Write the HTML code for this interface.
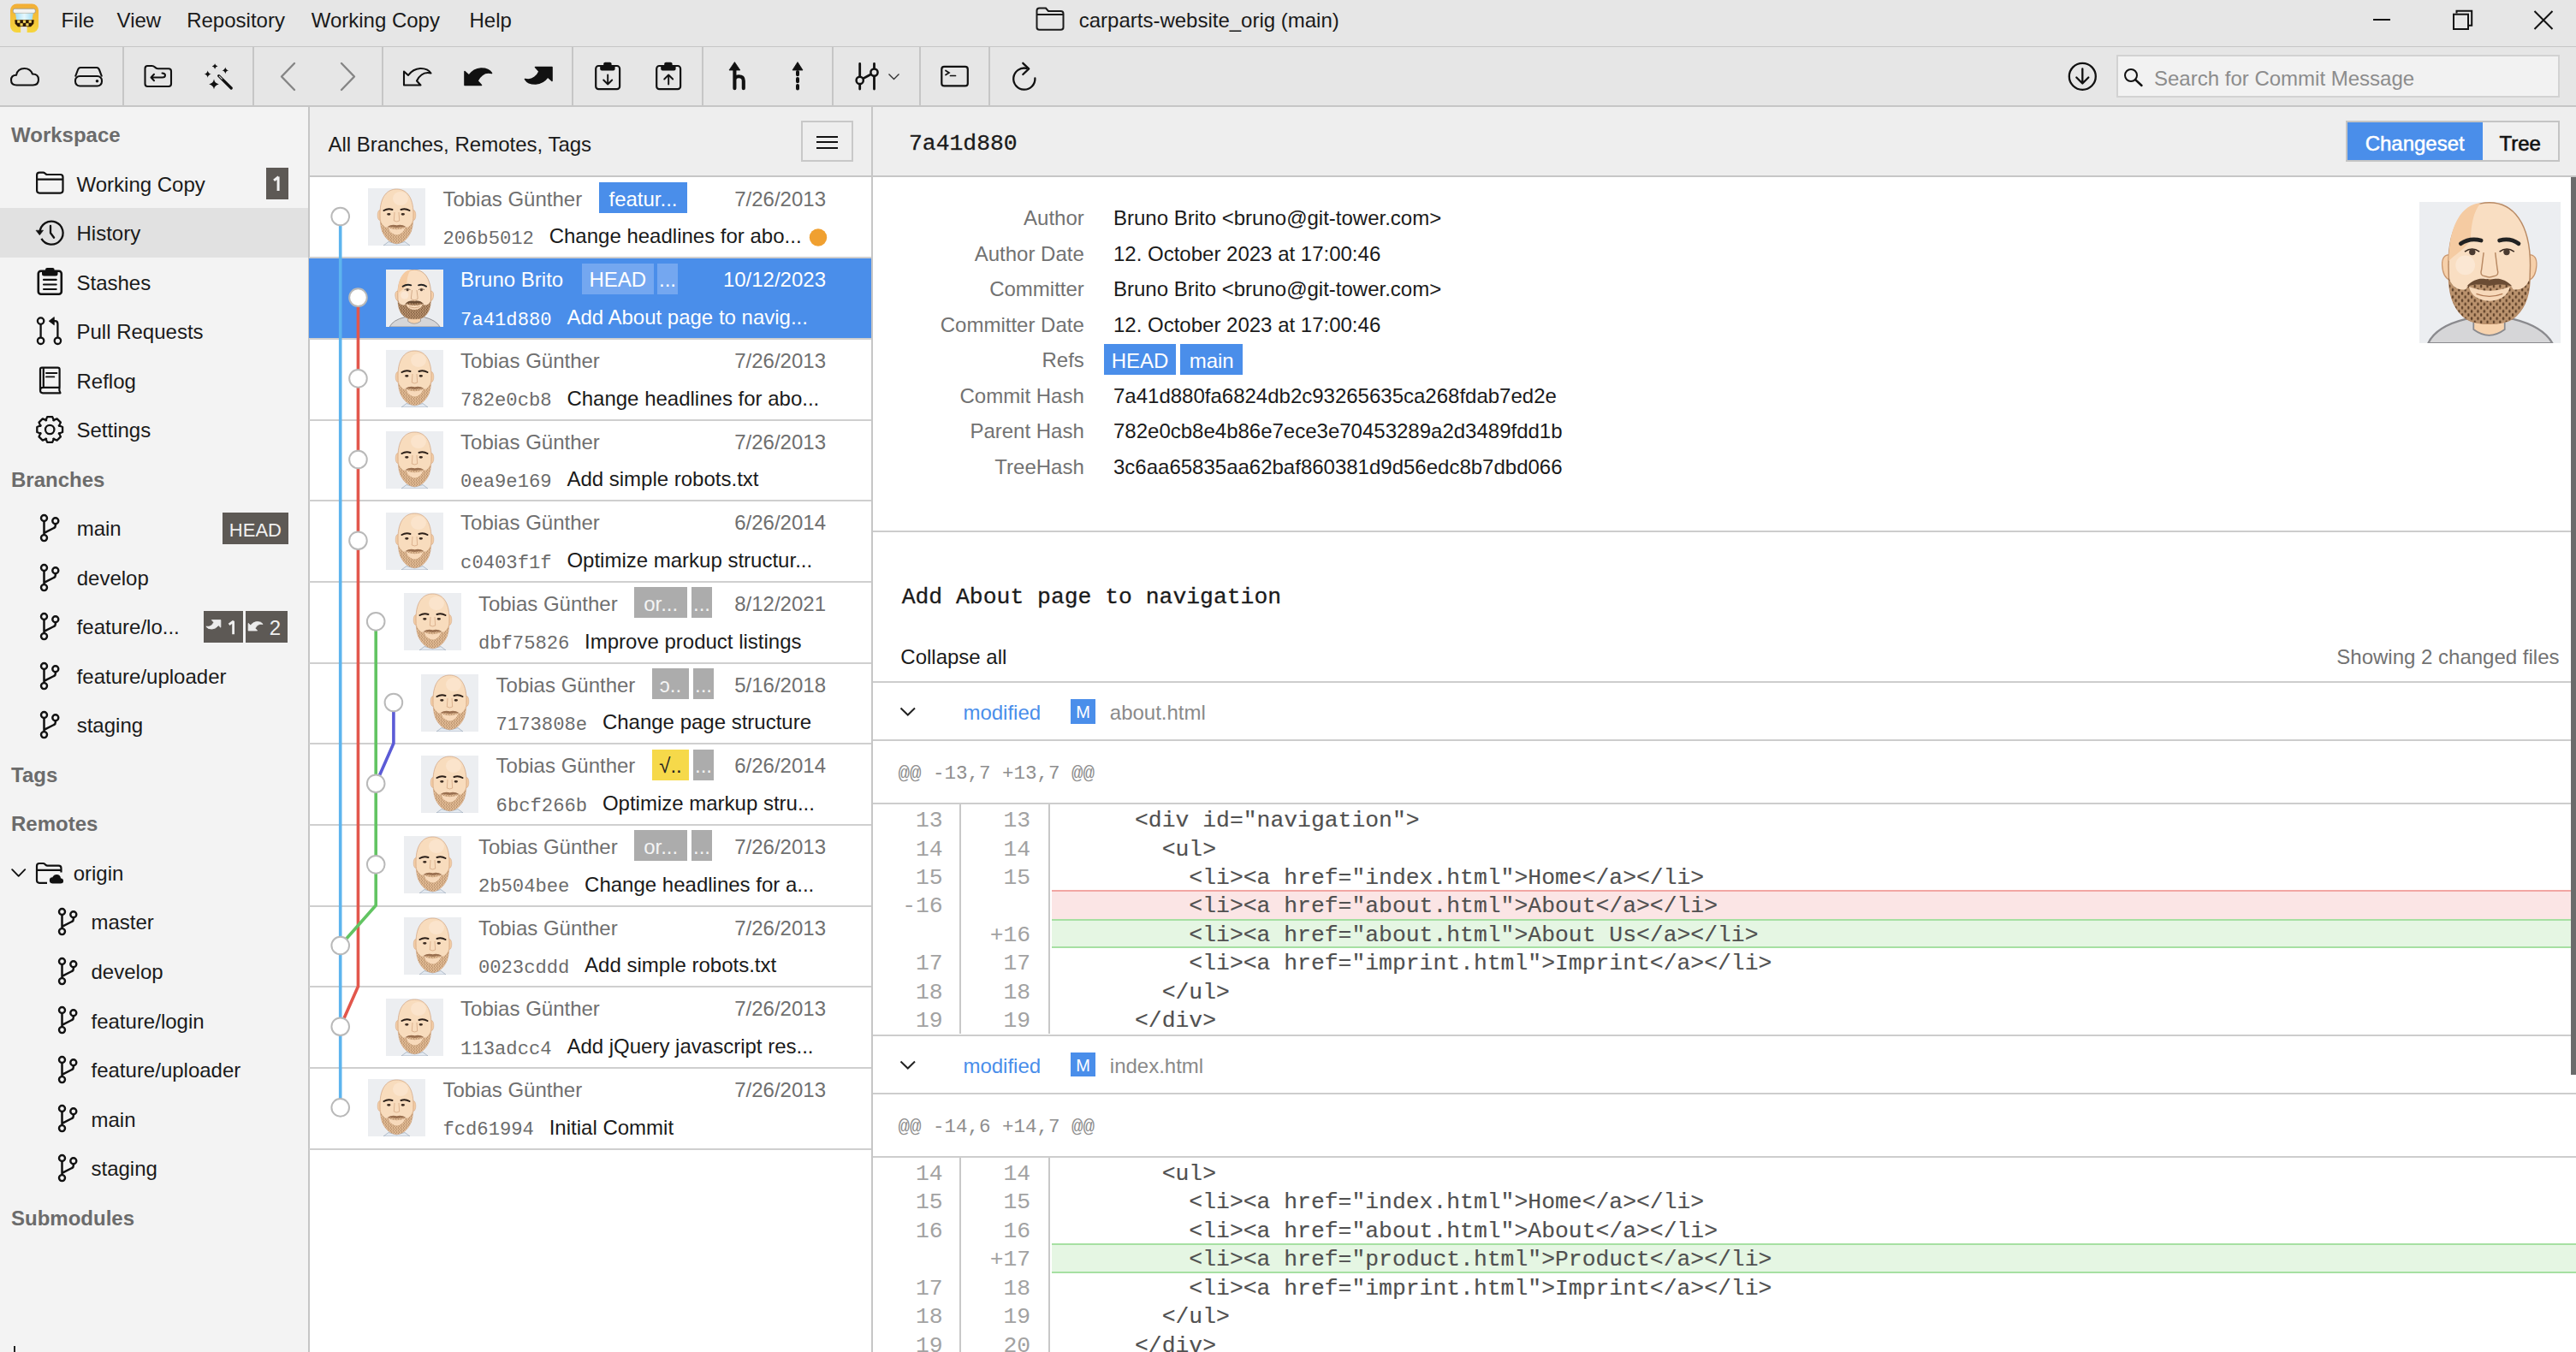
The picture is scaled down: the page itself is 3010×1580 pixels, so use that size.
<!DOCTYPE html><html><head><meta charset="utf-8"><style>
html,body{margin:0;padding:0;width:3010px;height:1580px;overflow:hidden;background:#fff}
.r,.t{position:absolute}
.t{white-space:nowrap}
svg.r{overflow:visible}
</style></head><body>

<svg width="0" height="0" style="position:absolute">
<defs>
<pattern id="stub" width="3" height="3.4" patternUnits="userSpaceOnUse">
<rect width="3" height="3.4" fill="#e2bb94"/><ellipse cx="0.8" cy="0.9" rx="0.45" ry="0.7" fill="#8a6444"/><ellipse cx="2.3" cy="2.6" rx="0.45" ry="0.7" fill="#8a6444"/></pattern>
<pattern id="stub2" width="3" height="3.4" patternUnits="userSpaceOnUse">
<rect width="3" height="3.4" fill="#bb936e"/><ellipse cx="0.8" cy="0.9" rx="0.5" ry="0.8" fill="#5e4028"/><ellipse cx="2.3" cy="2.6" rx="0.5" ry="0.8" fill="#5e4028"/></pattern>
<symbol id="avT" viewBox="0 0 67 67">
<rect width="67" height="67" fill="#eceef1"/>
<path d="M18 67 L24 62.5 L33.5 65 L43 62.5 L49 67 Z" fill="#e3e9f0" stroke="#9aa8b8" stroke-width="0.7"/>
<ellipse cx="13.8" cy="31.5" rx="2.6" ry="6" fill="#f3cda6" stroke="#d2a27c" stroke-width="0.5"/>
<ellipse cx="53.2" cy="31.5" rx="2.6" ry="6" fill="#f3cda6" stroke="#d2a27c" stroke-width="0.5"/>
<path d="M14 30 C14 9 23 1 33.5 1 C44 1 53 9 53 30 C53 38 52.5 44 50.5 50 C47 59 40 64.5 33.5 64.5 C27 64.5 20 59 16.5 50 C14.5 44 14 38 14 30 Z" fill="#f8dcbd" stroke="#c9966e" stroke-width="0.6"/>
<ellipse cx="38" cy="12" rx="9" ry="8" fill="#fbe6cf" opacity="0.8"/>
<path d="M14.5 37 C15 44 15.5 47 16.5 50 C20 59 27 64.5 33.5 64.5 C40 64.5 47 59 50.5 50 C51.5 47 52 44 52.5 37 C50.5 43 47.5 46 44 46 C41 44 37 43 33.5 43 C30 43 26 44 23 46 C19.5 46 16.5 43 14.5 37 Z" fill="url(#stub)"/>
<path d="M23.5 46 Q33.5 50.5 43.5 46 Q40.5 54 33.5 54.5 Q26.5 54 23.5 46 Z" fill="#f7d9ba"/>
<path d="M22 45.5 C27 42 31 42.5 33.5 43.5 C36 42.5 40 42 45 45.5 C40 45 36 45.5 33.5 46 C31 45.5 27 45 22 45.5 Z" fill="#9a7050"/>
<path d="M18.5 26 Q23.5 23 28.5 25" stroke="#2b1f18" stroke-width="2" fill="none" stroke-linecap="round"/>
<path d="M38.5 25 Q43.5 23 48.5 26" stroke="#2b1f18" stroke-width="2" fill="none" stroke-linecap="round"/>
<ellipse cx="24.3" cy="30.3" rx="2.2" ry="1.4" fill="#3a2a20"/>
<ellipse cx="40.8" cy="30.3" rx="2.2" ry="1.4" fill="#3a2a20"/>
<path d="M31 28 L30.3 38 Q33.5 40 36.7 38 L36 28" stroke="#c99770" stroke-width="0.6" fill="none"/>
</symbol>
<symbol id="avB" viewBox="0 0 67 67">
<rect width="67" height="67" fill="#eceef1"/>
<path d="M4.2 67 Q8 59 22 55.6 L44.5 55.6 Q58.5 59 63.1 67 Z" fill="#d6d6d8" stroke="#8a8a8e" stroke-width="0.9"/>
<path d="M25.7 52 L25.7 60.5 Q33.1 66 40.5 60.5 L40.5 52 Z" fill="#f7d3ae" stroke="#8a8a8e" stroke-width="0.7"/>
<path d="M14.5 25 Q10.6 25 10.8 30 Q11.2 36 14.5 37 Z" fill="#f6d0aa" stroke="#c9966e" stroke-width="0.5"/>
<path d="M52 25 Q55.8 25 55.6 30 Q55.2 36 52 37 Z" fill="#f6d0aa" stroke="#c9966e" stroke-width="0.5"/>
<path d="M13.8 30 C13.8 10 22 0.3 33.2 0.3 C44.4 0.3 52.6 10 52.6 30 L52.4 37 C52 46 49 52 44 55.5 C41 57.5 37 57.8 33.2 57.8 C29.4 57.8 25.4 57.5 22.4 55.5 C17.4 52 14.4 46 14 37 Z" fill="#f9dec2" stroke="#b98a64" stroke-width="0.6"/>
<path d="M13.9 28 C13.9 10 21 0.8 29 0.6 C26 4 24.5 10 24.3 18 C22 22 17 25 13.9 28 Z" fill="#f5cba2"/>
<circle cx="21.8" cy="30" r="4.6" fill="#fbe7d3"/>
<path d="M14 36 C14.2 46 17 52 22.4 55.5 C25.4 57.5 29.4 57.8 33.2 57.8 C37 57.8 41 57.5 44 55.5 C49 52 52 46 52.4 36 C51 40.5 48 42 44.5 41.5 C43.5 39 39 36.5 33.2 36.5 C27.5 36.5 23 39 22 41.5 C18.5 42 15.5 40.5 14 36 Z" fill="url(#stub2)"/>
<path d="M23.5 40.2 Q33.2 44 43 40.2 Q41.5 46.5 33.2 47 Q25 46.5 23.5 40.2 Z" fill="#f7d9ba"/>
<path d="M27 43.6 Q33.2 46 39.5 43.6" stroke="#b07a55" stroke-width="0.5" fill="none"/>
<path d="M22.5 40 C26 36.2 30 35.8 33.2 37.2 C36.5 35.8 40.5 36.2 44 40 C40 38.8 36.5 39 33.2 39.8 C30 39 26.5 38.8 22.5 40 Z" fill="#6a4c34"/>
<path d="M19.6 19.8 Q24 16.8 29.3 18.3" stroke="#222" stroke-width="1.9" fill="none" stroke-linecap="round"/>
<path d="M38 18.3 Q43 16.8 47.1 19.8" stroke="#222" stroke-width="1.9" fill="none" stroke-linecap="round"/>
<path d="M21.5 23.6 Q25 21 28.5 23.6" stroke="#3a2a20" stroke-width="0.6" fill="none"/>
<path d="M38 23.6 Q41.5 21 45 23.6" stroke="#3a2a20" stroke-width="0.6" fill="none"/>
<circle cx="25.1" cy="23.8" r="1.5" fill="#4a3a30"/>
<circle cx="41.4" cy="23.8" r="1.5" fill="#4a3a30"/>
<path d="M30.5 24 L29.5 32 Q28.5 35 31 35.2 Q33.2 36.2 35.4 35.2 Q38 35 37 32 L36 24" stroke="#b98a64" stroke-width="0.6" fill="none"/>
</symbol>
</defs></svg>

<div class="r" style="left:0.0px;top:0.0px;width:3010.0px;height:54.0px;background:#e6e6e6"></div>
<div class="r" style="left:0.0px;top:53.6px;width:3010.0px;height:1.8px;background:#c6c6c6"></div>
<svg class="r" style="left:11.0px;top:4.0px" width="35" height="35" viewBox="0 0 35 35">
<defs><linearGradient id="ig" x1="0" y1="0" x2="0" y2="1"><stop offset="0" stop-color="#f2ad35"/><stop offset="1" stop-color="#f6d63e"/></linearGradient>
<linearGradient id="gl" x1="0" y1="0" x2="1" y2="0"><stop offset="0" stop-color="#9fdcf5"/><stop offset="0.5" stop-color="#e6f8fd"/><stop offset="1" stop-color="#9fdcf5"/></linearGradient></defs>
<rect x="1" y="0.5" width="33" height="33.5" rx="7.5" fill="url(#ig)"/>
<rect x="4.3" y="6.2" width="26" height="5.2" rx="2" fill="#f3f3f1" stroke="#8c8c8c" stroke-width="0.7"/>
<path d="M7 11.4 L27.8 11.4 L26.5 19.3 L8.3 19.3 Z" fill="url(#gl)"/>
<path d="M6.3 19.3 L28.7 19.3 L28.3 23.8 L25 27.2 L10 27.2 L6.7 23.8 Z" fill="#2a1606"/><rect x="9.2" y="19.6" width="3.2" height="3.2" fill="#f4d75e"/><rect x="15.9" y="19.6" width="3.2" height="3.2" fill="#f4d75e"/><rect x="22.6" y="19.6" width="3.2" height="3.2" fill="#f4d75e"/><rect x="12.5" y="23.2" width="3.2" height="3.2" fill="#f4d75e"/><rect x="19.3" y="23.2" width="3.2" height="3.2" fill="#f4d75e"/><rect x="13.2" y="27.2" width="7.4" height="6.8" fill="#e6e6e4"/>
</svg>
<div class="t" style="left:71.4px;top:6.5px;font-size:24.0px;line-height:34px;font-family:'Liberation Sans', sans-serif;color:#1a1a1a">File</div>
<div class="t" style="left:136.6px;top:6.5px;font-size:24.0px;line-height:34px;font-family:'Liberation Sans', sans-serif;color:#1a1a1a">View</div>
<div class="t" style="left:218.2px;top:6.5px;font-size:24.0px;line-height:34px;font-family:'Liberation Sans', sans-serif;color:#1a1a1a">Repository</div>
<div class="t" style="left:363.7px;top:6.5px;font-size:24.0px;line-height:34px;font-family:'Liberation Sans', sans-serif;color:#1a1a1a">Working Copy</div>
<div class="t" style="left:548.5px;top:6.5px;font-size:24.0px;line-height:34px;font-family:'Liberation Sans', sans-serif;color:#1a1a1a">Help</div>
<svg class="r" style="left:1209.0px;top:7.0px" width="36" height="30" viewBox="0 0 36 30"><path d="M2.5 5.5 Q2.5 2.5 5.5 2.5 L13 2.5 L16 6 L30.5 6 Q33.5 6 33.5 9 L33.5 25 Q33.5 27.8 30.5 27.8 L5.5 27.8 Q2.5 27.8 2.5 25 Z M2.5 10 L33.5 10" fill="none" stroke="#1a1a1a" stroke-width="2"/></svg>
<div class="t" style="left:1260.7px;top:7.0px;font-size:24.0px;line-height:34px;font-family:'Liberation Sans', sans-serif;color:#1a1a1a">carparts-website_orig (main)</div>
<div class="r" style="left:2772.5px;top:21.8px;width:20.5px;height:2.0px;background:#111"></div>
<svg class="r" style="left:2862.0px;top:8.0px" width="32" height="30" viewBox="0 0 32 30"><path d="M8.5 7.5 L8.5 4.7 L26.2 4.7 L26.2 21.8 L22 21.8" fill="none" stroke="#111" stroke-width="2"/><rect x="5" y="8.7" width="17" height="17.3" fill="none" stroke="#111" stroke-width="2"/></svg>
<svg class="r" style="left:2958.0px;top:10.0px" width="28" height="28" viewBox="0 0 28 28"><path d="M3.5 3 L24.5 24 M24.5 3 L3.5 24" stroke="#111" stroke-width="2"/></svg>
<div class="r" style="left:0.0px;top:55.0px;width:3010.0px;height:68.0px;background:#e6e6e6"></div>
<div class="r" style="left:0.0px;top:123.0px;width:3010.0px;height:2.0px;background:#c6c6c6"></div>
<div class="r" style="left:142.6px;top:55.0px;width:2.0px;height:68.0px;background:#c6c6c6"></div>
<div class="r" style="left:295.0px;top:55.0px;width:2.0px;height:68.0px;background:#c6c6c6"></div>
<div class="r" style="left:446.0px;top:55.0px;width:2.0px;height:68.0px;background:#c6c6c6"></div>
<div class="r" style="left:668.4px;top:55.0px;width:2.0px;height:68.0px;background:#c6c6c6"></div>
<div class="r" style="left:820.0px;top:55.0px;width:2.0px;height:68.0px;background:#c6c6c6"></div>
<div class="r" style="left:971.7px;top:55.0px;width:2.0px;height:68.0px;background:#c6c6c6"></div>
<div class="r" style="left:1073.6px;top:55.0px;width:2.0px;height:68.0px;background:#c6c6c6"></div>
<div class="r" style="left:1154.6px;top:55.0px;width:2.0px;height:68.0px;background:#c6c6c6"></div>
<svg class="r" style="left:0;top:55px" width="3010" height="70" viewBox="0 55 3010 70"><path d="M19.5 99.5 Q13 99.5 13 93.5 Q13 88 19 87.8 Q20.5 80 28.5 80 Q35.5 80 38 86.5 Q45 86.5 45 93 Q45 99.5 38.5 99.5 Z" fill="none" stroke="#111" stroke-width="2.1" stroke-linejoin="round"/><path d="M94 79 L113 79 Q115 79 116 81.5 L119 89.5 M88 89.5 L91 81.5 Q92 79 94 79" fill="none" stroke="#111" stroke-width="2.1"/><rect x="88" y="89" width="31" height="11.5" rx="5.2" fill="none" stroke="#111" stroke-width="2.1"/><circle cx="113.5" cy="94.8" r="1.8" fill="#111"/><path d="M169.5 80 Q169.5 77 172.5 77 L177.5 77 Q179.5 77 181 78.5 Q182.5 80.2 184.5 80.2 L197 80.2 Q200 80.2 200 83.2 L200 98 Q200 101 197 101 L172.5 101 Q169.5 101 169.5 98 Z" fill="none" stroke="#111" stroke-width="2.1"/><path d="M180 86.8 L176.5 90.5 L180 94.2 M177 90.5 L189.5 90.5 Q193 90.5 193 88 Q193 85.5 189.5 85.5" fill="none" stroke="#111" stroke-width="2" stroke-linecap="round" stroke-linejoin="round"/><path d="M251.10 74.20 Q251.63 76.97 254.40 77.50 Q251.63 78.03 251.10 80.80 Q250.57 78.03 247.80 77.50 Q250.57 76.97 251.10 74.20 Z M263.30 78.40 Q263.92 81.68 267.20 82.30 Q263.92 82.92 263.30 86.20 Q262.68 82.92 259.40 82.30 Q262.68 81.68 263.30 78.40 Z M242.70 82.40 Q243.37 85.93 246.90 86.60 Q243.37 87.27 242.70 90.80 Q242.03 87.27 238.50 86.60 Q242.03 85.93 242.70 82.40 Z M250.00 92.60 Q250.93 97.47 255.80 98.40 Q250.93 99.33 250.00 104.20 Q249.07 99.33 244.20 98.40 Q249.07 97.47 250.00 92.60 Z" fill="#111"/><path d="M255.7 88.6 L270.2 103" stroke="#111" stroke-width="3.2" stroke-linecap="round"/><path d="M256.3 89.2 L259.3 92.2" stroke="#e6e6e6" stroke-width="1.1" stroke-linecap="round"/><path d="M344 74 L329 89.5 L344 105" fill="none" stroke="#858585" stroke-width="2.4" stroke-linecap="round" stroke-linejoin="round"/><path d="M399 74 L414 89.5 L399 105" fill="none" stroke="#858585" stroke-width="2.4" stroke-linecap="round" stroke-linejoin="round"/><path transform="translate(469,75)" d="M3 8.5 L8 13 Q13.5 5.5 22 5 Q31 4.8 34.5 10.5 Q28 9 23.5 12.5 Q20 15 18 19.5 L22.5 24.5 L3 24.5 Z" fill="none" stroke="#111" stroke-width="2.1" stroke-linejoin="round"/><path transform="translate(540,75)" d="M3 8.5 L8 13 Q13.5 5.5 22 5 Q31 4.8 34.5 10.5 Q28 9 23.5 12.5 Q20 15 18 19.5 L22.5 24.5 L3 24.5 Z" fill="#111" stroke="#111" stroke-width="1.6" stroke-linejoin="round"/><path transform="translate(648,103) scale(-1,-1)" d="M3 8.5 L8 13 Q13.5 5.5 22 5 Q31 4.8 34.5 10.5 Q28 9 23.5 12.5 Q20 15 18 19.5 L22.5 24.5 L3 24.5 Z" fill="#111" stroke="#111" stroke-width="1.6" stroke-linejoin="round"/><g transform="translate(0,0)"><rect x="696.2" y="77" width="27.9" height="27.2" rx="3.2" fill="none" stroke="#111" stroke-width="2.2"/><path d="M701.2 77 L701.2 80.5 Q701.2 82.4 703.2 82.4 L716.6 82.4 Q718.6 82.4 718.6 80.5 L718.6 77 L714.6 77 L714.6 74.5 Q714.6 72.8 712.6 72.8 L707.2 72.8 Q705.2 72.8 705.2 74.5 L705.2 77 Z" fill="#111"/><path d="M710.2 87.5 L710.2 98.5 M705.2 93.5 L710.2 98.5 L715.2 93.5" fill="none" stroke="#111" stroke-width="1.9" stroke-linecap="round" stroke-linejoin="round"/></g><g transform="translate(71,0)"><rect x="696.2" y="77" width="27.9" height="27.2" rx="3.2" fill="none" stroke="#111" stroke-width="2.2"/><path d="M701.2 77 L701.2 80.5 Q701.2 82.4 703.2 82.4 L716.6 82.4 Q718.6 82.4 718.6 80.5 L718.6 77 L714.6 77 L714.6 74.5 Q714.6 72.8 712.6 72.8 L707.2 72.8 Q705.2 72.8 705.2 74.5 L705.2 77 Z" fill="#111"/><path d="M710.2 98.5 L710.2 87.5 M705.2 92.5 L710.2 87.5 L715.2 92.5" fill="none" stroke="#111" stroke-width="1.9" stroke-linecap="round" stroke-linejoin="round"/></g><path d="M852 82 L858.4 72.6 L864.8 82 Z" fill="#111" stroke="#111" stroke-width="0.8" stroke-linejoin="round"/><path d="M858.4 80 L858.4 103.2 M858.4 93.5 Q858.4 89.2 863.2 89.2 Q868.8 89.2 868.8 94.5 L868.8 103.2" fill="none" stroke="#111" stroke-width="4.1" stroke-linecap="round"/><path d="M926 82 L932 72.6 L938 82 Z" fill="#111" stroke="#111" stroke-width="0.8" stroke-linejoin="round"/><path d="M932 84 L932 87.2 M932 92 L932 95.2 M932 100 L932 103.5" fill="none" stroke="#111" stroke-width="4" stroke-linecap="round"/><path d="M1004.7 74.5 L1004.7 104 M1021.5 74.5 L1021.5 104" stroke="#111" stroke-width="2.8" stroke-linecap="round"/><path d="M1004.7 93.9 L1021.5 84.6" stroke="#111" stroke-width="2.8"/><circle cx="1004.7" cy="93.9" r="4.1" fill="#e6e6e6" stroke="#111" stroke-width="2.5"/><circle cx="1021.5" cy="84.6" r="4.1" fill="#e6e6e6" stroke="#111" stroke-width="2.5"/><path d="M1038.5 86.5 L1044.5 92.5 L1050.5 86.5" fill="none" stroke="#333" stroke-width="1.4"/><rect x="1100.3" y="77.9" width="30.5" height="22.5" rx="3" fill="none" stroke="#111" stroke-width="2.2"/><path d="M1105 82.5 L1109 85 L1105 87.5 M1110.5 88.5 L1116.5 88.5" fill="none" stroke="#111" stroke-width="1.7" stroke-linecap="round"/><path d="M1199.5 79.8 A12.6 12.6 0 1 0 1209.4 91.5" fill="none" stroke="#111" stroke-width="2.3" stroke-linecap="round"/><path d="M1195.3 73.8 L1202.2 80.4 L1195.3 87" fill="none" stroke="#111" stroke-width="2.3" stroke-linecap="round" stroke-linejoin="round"/><circle cx="2433.3" cy="89.3" r="15.5" fill="none" stroke="#111" stroke-width="2.3"/><path d="M2433.3 80.5 L2433.3 97.5 M2426.3 90.5 L2433.3 97.5 L2440.3 90.5" fill="none" stroke="#111" stroke-width="2.3" stroke-linecap="round" stroke-linejoin="round"/></svg>
<div class="r" style="left:2473.0px;top:64.0px;width:518.0px;height:50.0px;background:#f2f2f2;box-sizing:border-box;border:2px solid #d2d2d2"></div>
<svg class="r" style="left:2480.0px;top:78.0px" width="26" height="24" viewBox="0 0 26 24"><circle cx="10" cy="10" r="7" fill="none" stroke="#111" stroke-width="2"/><path d="M15 15 L22.5 22" stroke="#111" stroke-width="2.4" stroke-linecap="round"/></svg>
<div class="t" style="left:2517.0px;top:74.5px;font-size:24.0px;line-height:34px;font-family:'Liberation Sans', sans-serif;color:#8c8c8c">Search for Commit Message</div>
<div class="r" style="left:0.0px;top:125.0px;width:360.0px;height:1455.0px;background:#f3f3f3"></div>
<div class="r" style="left:360.0px;top:125.0px;width:2.0px;height:1455.0px;background:#c6c6c6"></div>
<div class="r" style="left:0.0px;top:243.1px;width:360.0px;height:57.5px;background:#e1e1e1"></div>
<div class="t" style="left:13.0px;top:141.1px;font-size:24.0px;line-height:34px;font-family:'Liberation Sans', sans-serif;color:#6b6b6b;font-weight:bold">Workspace</div>
<div class="t" style="left:13.0px;top:543.7px;font-size:24.0px;line-height:34px;font-family:'Liberation Sans', sans-serif;color:#6b6b6b;font-weight:bold">Branches</div>
<div class="t" style="left:13.0px;top:888.9px;font-size:24.0px;line-height:34px;font-family:'Liberation Sans', sans-serif;color:#6b6b6b;font-weight:bold">Tags</div>
<div class="t" style="left:13.0px;top:946.4px;font-size:24.0px;line-height:34px;font-family:'Liberation Sans', sans-serif;color:#6b6b6b;font-weight:bold">Remotes</div>
<div class="t" style="left:13.0px;top:1406.5px;font-size:24.0px;line-height:34px;font-family:'Liberation Sans', sans-serif;color:#6b6b6b;font-weight:bold">Submodules</div>
<div class="t" style="left:89.5px;top:198.6px;font-size:24.0px;line-height:34px;font-family:'Liberation Sans', sans-serif;color:#1a1a1a">Working Copy</div>
<div class="t" style="left:89.5px;top:256.1px;font-size:24.0px;line-height:34px;font-family:'Liberation Sans', sans-serif;color:#1a1a1a">History</div>
<div class="t" style="left:89.5px;top:313.7px;font-size:24.0px;line-height:34px;font-family:'Liberation Sans', sans-serif;color:#1a1a1a">Stashes</div>
<div class="t" style="left:89.5px;top:371.2px;font-size:24.0px;line-height:34px;font-family:'Liberation Sans', sans-serif;color:#1a1a1a">Pull Requests</div>
<div class="t" style="left:89.5px;top:428.7px;font-size:24.0px;line-height:34px;font-family:'Liberation Sans', sans-serif;color:#1a1a1a">Reflog</div>
<div class="t" style="left:89.5px;top:486.2px;font-size:24.0px;line-height:34px;font-family:'Liberation Sans', sans-serif;color:#1a1a1a">Settings</div>
<svg class="r" style="left:0;top:125px" width="360" height="1455" viewBox="0 125 360 1455"><path d="M43.1 204.6 Q43.1 201.6 46.1 201.6 L50.5 201.6 Q51.5 201.6 52.3 202.4 L53.5 203.3 Q54.3 204 55.3 204 L70.5 204 Q73.5 204 73.5 207 L73.5 222.6 Q73.5 225.6 70.5 225.6 L46.1 225.6 Q43.1 225.6 43.1 222.6 Z M43.1 209.7 L73.5 209.7" fill="none" stroke="#111" stroke-width="2.2" stroke-linejoin="round"/><path d="M46.6 271.6 A13.5 13.5 0 1 1 48.4 278.9" fill="none" stroke="#111" stroke-width="2.3"/><path d="M42 269.2 L50.6 269.2 L46.3 274.8 Z" fill="#111" stroke="#111" stroke-width="0.6" stroke-linejoin="round"/><path d="M59 264 L59 272.2 L63.1 277.7" fill="none" stroke="#111" stroke-width="2.3" stroke-linecap="round" stroke-linejoin="round"/><rect x="44.8" y="316.8" width="27" height="27" rx="3" fill="none" stroke="#111" stroke-width="2.6"/><path d="M49 316 L49 320 Q49 322.5 51.5 322.5 L65 322.5 Q67.5 322.5 67.5 320 L67.5 316 L63.5 316 L63.5 314.5 Q63.5 312.9 61.5 312.9 L55.1 312.9 Q53.1 312.9 53.1 314.5 L53.1 316 Z" fill="#111"/><path d="M51 326.9 L65.7 326.9 M51 332.5 L65.7 332.5 M51 338 L65.7 338" stroke="#111" stroke-width="2.1" stroke-linecap="round"/><circle cx="47.6" cy="375.1" r="3.7" fill="none" stroke="#111" stroke-width="2.3"/><circle cx="47.6" cy="398.3" r="3.7" fill="none" stroke="#111" stroke-width="2.3"/><circle cx="67.4" cy="398.3" r="3.7" fill="none" stroke="#111" stroke-width="2.3"/><path d="M47.6 378.8 L47.6 394.6 M67.4 394.6 L67.4 378.5 Q67.4 375.2 64.2 375.2 L61.5 375.2" fill="none" stroke="#111" stroke-width="2.3"/><path d="M57.2 375.2 L63.3 370.6 L63.3 379.8 Z" fill="#111" stroke="#111" stroke-width="0.8" stroke-linejoin="round"/><path d="M47 456 L47 431.5 Q47 429.6 49 429.6 L67.5 429.6 Q69.6 429.6 69.6 431.5 L69.6 452.8 L50 452.8 Q47 452.8 47 456 Q47 459.3 50 459.3 L70.5 459.3 Q68.5 456 69.6 452.8 M50.8 430.5 L50.8 452" fill="none" stroke="#111" stroke-width="2.2" stroke-linejoin="round"/><path d="M54 436 L66.4 436 M54 440.4 L63.3 440.4" stroke="#111" stroke-width="1.9" stroke-linecap="round"/><path d="M73.10 498.98 L73.10 505.02 L68.79 506.73 L69.03 506.14 L70.87 510.40 L66.60 514.67 L62.34 512.83 L62.93 512.59 L61.22 516.90 L55.18 516.90 L53.47 512.59 L54.06 512.83 L49.80 514.67 L45.53 510.40 L47.37 506.14 L47.61 506.73 L43.30 505.02 L43.30 498.98 L47.61 497.27 L47.37 497.86 L45.53 493.60 L49.80 489.33 L54.06 491.17 L53.47 491.41 L55.18 487.10 L61.22 487.10 L62.93 491.41 L62.34 491.17 L66.60 489.33 L70.87 493.60 L69.03 497.86 L68.79 497.27 Z" fill="none" stroke="#111" stroke-width="2.3" stroke-linejoin="round"/><circle cx="58.2" cy="502" r="5.2" fill="none" stroke="#111" stroke-width="2.3"/><path d="M14.2 1016.2 L21.7 1023.8 L29.2 1016.2" fill="none" stroke="#111" stroke-width="1.9" stroke-linecap="round" stroke-linejoin="round"/><path d="M55 1031.8 L46 1031.8 Q43 1031.8 43 1028.8 L43 1012 Q43 1009 46 1009 L50.5 1009 Q51.5 1009 52.3 1009.8 L53.5 1010.9 Q54.3 1011.7 55.3 1011.7 L68.5 1011.7 Q71.5 1011.7 71.5 1014.7 L71.5 1019.5 M43 1016.8 L71.2 1016.8" fill="none" stroke="#111" stroke-width="2.2" stroke-linejoin="round"/><path d="M61.5 1033 Q57.2 1033 57.2 1028.8 Q57.2 1025 61 1024.6 Q62.5 1021.3 66.2 1021.3 Q70.8 1021.3 71.5 1025.8 Q74.7 1026.3 74.7 1029.5 Q74.7 1033 71 1033 Z" fill="#111" stroke="#f3f3f3" stroke-width="1.2"/></svg>
<svg class="r" style="left:44.0px;top:599.0px" width="26" height="36" viewBox="0 0 26 36"><circle cx="7.5" cy="6.5" r="3.5" fill="none" stroke="#111" stroke-width="2.4"/><circle cx="20.8" cy="9.8" r="3.5" fill="none" stroke="#111" stroke-width="2.4"/><circle cx="7.5" cy="29.6" r="3.5" fill="none" stroke="#111" stroke-width="2.4"/><path d="M7.5 10 L7.5 26.1 M20.8 13.3 L20.8 15.2 Q20.8 17.2 19 18 L8 23.6" fill="none" stroke="#111" stroke-width="2.5" stroke-linejoin="round"/></svg>
<div class="t" style="left:89.7px;top:601.3px;font-size:24.0px;line-height:34px;font-family:'Liberation Sans', sans-serif;color:#1a1a1a">main</div>
<svg class="r" style="left:44.0px;top:656.5px" width="26" height="36" viewBox="0 0 26 36"><circle cx="7.5" cy="6.5" r="3.5" fill="none" stroke="#111" stroke-width="2.4"/><circle cx="20.8" cy="9.8" r="3.5" fill="none" stroke="#111" stroke-width="2.4"/><circle cx="7.5" cy="29.6" r="3.5" fill="none" stroke="#111" stroke-width="2.4"/><path d="M7.5 10 L7.5 26.1 M20.8 13.3 L20.8 15.2 Q20.8 17.2 19 18 L8 23.6" fill="none" stroke="#111" stroke-width="2.5" stroke-linejoin="round"/></svg>
<div class="t" style="left:89.7px;top:658.8px;font-size:24.0px;line-height:34px;font-family:'Liberation Sans', sans-serif;color:#1a1a1a">develop</div>
<svg class="r" style="left:44.0px;top:714.1px" width="26" height="36" viewBox="0 0 26 36"><circle cx="7.5" cy="6.5" r="3.5" fill="none" stroke="#111" stroke-width="2.4"/><circle cx="20.8" cy="9.8" r="3.5" fill="none" stroke="#111" stroke-width="2.4"/><circle cx="7.5" cy="29.6" r="3.5" fill="none" stroke="#111" stroke-width="2.4"/><path d="M7.5 10 L7.5 26.1 M20.8 13.3 L20.8 15.2 Q20.8 17.2 19 18 L8 23.6" fill="none" stroke="#111" stroke-width="2.5" stroke-linejoin="round"/></svg>
<div class="t" style="left:89.7px;top:716.3px;font-size:24.0px;line-height:34px;font-family:'Liberation Sans', sans-serif;color:#1a1a1a">feature/lo...</div>
<svg class="r" style="left:44.0px;top:771.6px" width="26" height="36" viewBox="0 0 26 36"><circle cx="7.5" cy="6.5" r="3.5" fill="none" stroke="#111" stroke-width="2.4"/><circle cx="20.8" cy="9.8" r="3.5" fill="none" stroke="#111" stroke-width="2.4"/><circle cx="7.5" cy="29.6" r="3.5" fill="none" stroke="#111" stroke-width="2.4"/><path d="M7.5 10 L7.5 26.1 M20.8 13.3 L20.8 15.2 Q20.8 17.2 19 18 L8 23.6" fill="none" stroke="#111" stroke-width="2.5" stroke-linejoin="round"/></svg>
<div class="t" style="left:89.7px;top:773.8px;font-size:24.0px;line-height:34px;font-family:'Liberation Sans', sans-serif;color:#1a1a1a">feature/uploader</div>
<svg class="r" style="left:44.0px;top:829.1px" width="26" height="36" viewBox="0 0 26 36"><circle cx="7.5" cy="6.5" r="3.5" fill="none" stroke="#111" stroke-width="2.4"/><circle cx="20.8" cy="9.8" r="3.5" fill="none" stroke="#111" stroke-width="2.4"/><circle cx="7.5" cy="29.6" r="3.5" fill="none" stroke="#111" stroke-width="2.4"/><path d="M7.5 10 L7.5 26.1 M20.8 13.3 L20.8 15.2 Q20.8 17.2 19 18 L8 23.6" fill="none" stroke="#111" stroke-width="2.5" stroke-linejoin="round"/></svg>
<div class="t" style="left:89.7px;top:831.3px;font-size:24.0px;line-height:34px;font-family:'Liberation Sans', sans-serif;color:#1a1a1a">staging</div>
<svg class="r" style="left:64.5px;top:1059.2px" width="26" height="36" viewBox="0 0 26 36"><circle cx="7.5" cy="6.5" r="3.5" fill="none" stroke="#111" stroke-width="2.4"/><circle cx="20.8" cy="9.8" r="3.5" fill="none" stroke="#111" stroke-width="2.4"/><circle cx="7.5" cy="29.6" r="3.5" fill="none" stroke="#111" stroke-width="2.4"/><path d="M7.5 10 L7.5 26.1 M20.8 13.3 L20.8 15.2 Q20.8 17.2 19 18 L8 23.6" fill="none" stroke="#111" stroke-width="2.5" stroke-linejoin="round"/></svg>
<div class="t" style="left:106.5px;top:1061.4px;font-size:24.0px;line-height:34px;font-family:'Liberation Sans', sans-serif;color:#1a1a1a">master</div>
<svg class="r" style="left:64.5px;top:1116.7px" width="26" height="36" viewBox="0 0 26 36"><circle cx="7.5" cy="6.5" r="3.5" fill="none" stroke="#111" stroke-width="2.4"/><circle cx="20.8" cy="9.8" r="3.5" fill="none" stroke="#111" stroke-width="2.4"/><circle cx="7.5" cy="29.6" r="3.5" fill="none" stroke="#111" stroke-width="2.4"/><path d="M7.5 10 L7.5 26.1 M20.8 13.3 L20.8 15.2 Q20.8 17.2 19 18 L8 23.6" fill="none" stroke="#111" stroke-width="2.5" stroke-linejoin="round"/></svg>
<div class="t" style="left:106.5px;top:1118.9px;font-size:24.0px;line-height:34px;font-family:'Liberation Sans', sans-serif;color:#1a1a1a">develop</div>
<svg class="r" style="left:64.5px;top:1174.2px" width="26" height="36" viewBox="0 0 26 36"><circle cx="7.5" cy="6.5" r="3.5" fill="none" stroke="#111" stroke-width="2.4"/><circle cx="20.8" cy="9.8" r="3.5" fill="none" stroke="#111" stroke-width="2.4"/><circle cx="7.5" cy="29.6" r="3.5" fill="none" stroke="#111" stroke-width="2.4"/><path d="M7.5 10 L7.5 26.1 M20.8 13.3 L20.8 15.2 Q20.8 17.2 19 18 L8 23.6" fill="none" stroke="#111" stroke-width="2.5" stroke-linejoin="round"/></svg>
<div class="t" style="left:106.5px;top:1176.5px;font-size:24.0px;line-height:34px;font-family:'Liberation Sans', sans-serif;color:#1a1a1a">feature/login</div>
<svg class="r" style="left:64.5px;top:1231.7px" width="26" height="36" viewBox="0 0 26 36"><circle cx="7.5" cy="6.5" r="3.5" fill="none" stroke="#111" stroke-width="2.4"/><circle cx="20.8" cy="9.8" r="3.5" fill="none" stroke="#111" stroke-width="2.4"/><circle cx="7.5" cy="29.6" r="3.5" fill="none" stroke="#111" stroke-width="2.4"/><path d="M7.5 10 L7.5 26.1 M20.8 13.3 L20.8 15.2 Q20.8 17.2 19 18 L8 23.6" fill="none" stroke="#111" stroke-width="2.5" stroke-linejoin="round"/></svg>
<div class="t" style="left:106.5px;top:1234.0px;font-size:24.0px;line-height:34px;font-family:'Liberation Sans', sans-serif;color:#1a1a1a">feature/uploader</div>
<svg class="r" style="left:64.5px;top:1289.3px" width="26" height="36" viewBox="0 0 26 36"><circle cx="7.5" cy="6.5" r="3.5" fill="none" stroke="#111" stroke-width="2.4"/><circle cx="20.8" cy="9.8" r="3.5" fill="none" stroke="#111" stroke-width="2.4"/><circle cx="7.5" cy="29.6" r="3.5" fill="none" stroke="#111" stroke-width="2.4"/><path d="M7.5 10 L7.5 26.1 M20.8 13.3 L20.8 15.2 Q20.8 17.2 19 18 L8 23.6" fill="none" stroke="#111" stroke-width="2.5" stroke-linejoin="round"/></svg>
<div class="t" style="left:106.5px;top:1291.5px;font-size:24.0px;line-height:34px;font-family:'Liberation Sans', sans-serif;color:#1a1a1a">main</div>
<svg class="r" style="left:64.5px;top:1346.8px" width="26" height="36" viewBox="0 0 26 36"><circle cx="7.5" cy="6.5" r="3.5" fill="none" stroke="#111" stroke-width="2.4"/><circle cx="20.8" cy="9.8" r="3.5" fill="none" stroke="#111" stroke-width="2.4"/><circle cx="7.5" cy="29.6" r="3.5" fill="none" stroke="#111" stroke-width="2.4"/><path d="M7.5 10 L7.5 26.1 M20.8 13.3 L20.8 15.2 Q20.8 17.2 19 18 L8 23.6" fill="none" stroke="#111" stroke-width="2.5" stroke-linejoin="round"/></svg>
<div class="t" style="left:106.5px;top:1349.0px;font-size:24.0px;line-height:34px;font-family:'Liberation Sans', sans-serif;color:#1a1a1a">staging</div>
<div class="t" style="left:85.7px;top:1003.9px;font-size:24.0px;line-height:34px;font-family:'Liberation Sans', sans-serif;color:#1a1a1a">origin</div>
<div class="r" style="left:311.1px;top:195.9px;width:25.8px;height:36.9px;background:#5d5955"></div>
<svg class="r" style="left:311.1px;top:195.9px" width="26" height="37" viewBox="311.1 195.9 26 37"><path d="M325.2 206.5 L325.2 223 M320.2 210.8 L325.6 206.6" stroke="#f2f2f2" stroke-width="3" stroke-linejoin="round"/></svg>
<div class="r" style="left:260.0px;top:599.0px;width:76.8px;height:36.8px;background:#5d5955"></div>
<div class="t" style="left:298.4px;width:0;display:flex;justify-content:center;top:602.8px;font-size:22.0px;line-height:34px;font-family:'Liberation Sans', sans-serif;color:#f0f0f0">HEAD</div>
<div class="r" style="left:238.0px;top:714.0px;width:46.2px;height:36.7px;background:#5d5955"></div>
<div class="r" style="left:286.5px;top:714.0px;width:49.3px;height:36.7px;background:#5d5955"></div>
<svg class="r" style="left:238.0px;top:714.0px" width="98" height="37" viewBox="238 714 98 37"><path transform="translate(259.5,737.8) scale(-0.54,-0.54)" d="M3 8.5 L8 13 Q13.5 5.5 22 5 Q31 4.8 34.5 10.5 Q28 9 23.5 12.5 Q20 15 18 19.5 L22.5 24.5 L3 24.5 Z" fill="#ececec" stroke="#ececec" stroke-width="1.5" stroke-linejoin="round"/><path transform="translate(288.5,723.8) scale(0.54,0.54)" d="M3 8.5 L8 13 Q13.5 5.5 22 5 Q31 4.8 34.5 10.5 Q28 9 23.5 12.5 Q20 15 18 19.5 L22.5 24.5 L3 24.5 Z" fill="#ececec" stroke="#ececec" stroke-width="1.5" stroke-linejoin="round"/></svg>
<svg class="r" style="left:262.0px;top:722.0px" width="16" height="22" viewBox="262 722 16 22"><path d="M272.6 725.8 L272.6 741.2 M267.6 729.8 L273 725.8" stroke="#efefef" stroke-width="2.8" stroke-linejoin="round"/></svg>
<div class="t" style="left:321.3px;width:0;display:flex;justify-content:center;top:717.0px;font-size:24.0px;line-height:34px;font-family:'Liberation Sans', sans-serif;color:#f0f0f0">2</div>
<div class="r" style="left:15.5px;top:1573.0px;width:2.0px;height:7.0px;background:#222"></div>
<div class="r" style="left:362.0px;top:125.0px;width:656.0px;height:80.0px;background:#eeeeee"></div>
<div class="r" style="left:362.0px;top:205.0px;width:658.0px;height:2.0px;background:#c6c6c6"></div>
<div class="r" style="left:362.0px;top:207.0px;width:656.0px;height:1373.0px;background:#ffffff"></div>
<div class="r" style="left:1018.0px;top:125.0px;width:2.0px;height:1455.0px;background:#c6c6c6"></div>
<div class="t" style="left:383.4px;top:151.5px;font-size:24.0px;line-height:34px;font-family:'Liberation Sans', sans-serif;color:#1a1a1a">All Branches, Remotes, Tags</div>
<div class="r" style="left:935.6px;top:141.3px;width:61.6px;height:47.7px;background:transparent;box-sizing:border-box;border:2px solid #c8c8c8"></div>
<div class="r" style="left:953.8px;top:158.5px;width:25.2px;height:2.0px;background:#111"></div>
<div class="r" style="left:953.8px;top:165.0px;width:25.2px;height:2.0px;background:#111"></div>
<div class="r" style="left:953.8px;top:171.5px;width:25.2px;height:2.0px;background:#111"></div>
<div class="r" style="left:361.0px;top:302.2px;width:657.0px;height:92.9px;background:#4a8eea"></div>
<div class="r" style="left:361.0px;top:300.2px;width:657.0px;height:2.0px;background:#cfcfcf"></div>
<div class="r" style="left:361.0px;top:394.8px;width:657.0px;height:2.0px;background:#cfcfcf"></div>
<div class="r" style="left:361.0px;top:489.5px;width:657.0px;height:2.0px;background:#cfcfcf"></div>
<div class="r" style="left:361.0px;top:584.2px;width:657.0px;height:2.0px;background:#cfcfcf"></div>
<div class="r" style="left:361.0px;top:678.9px;width:657.0px;height:2.0px;background:#cfcfcf"></div>
<div class="r" style="left:361.0px;top:773.5px;width:657.0px;height:2.0px;background:#cfcfcf"></div>
<div class="r" style="left:361.0px;top:868.2px;width:657.0px;height:2.0px;background:#cfcfcf"></div>
<div class="r" style="left:361.0px;top:962.9px;width:657.0px;height:2.0px;background:#cfcfcf"></div>
<div class="r" style="left:361.0px;top:1057.5px;width:657.0px;height:2.0px;background:#cfcfcf"></div>
<div class="r" style="left:361.0px;top:1152.2px;width:657.0px;height:2.0px;background:#cfcfcf"></div>
<div class="r" style="left:361.0px;top:1246.9px;width:657.0px;height:2.0px;background:#cfcfcf"></div>
<div class="r" style="left:361.0px;top:1341.5px;width:657.0px;height:2.0px;background:#cfcfcf"></div>
<svg class="r" style="left:361.0px;top:206.0px" width="120" height="1140" viewBox="0 0 120 1140"><polyline points="36.70,47.00 36.70,1088.37" fill="none" stroke="#5db4ee" stroke-width="3.6" stroke-linejoin="round"/><polyline points="57.45,141.67 57.45,946.70 36.70,993.70" fill="none" stroke="#e2574c" stroke-width="3.6" stroke-linejoin="round"/><polyline points="78.20,520.35 78.20,852.03 36.70,899.03" fill="none" stroke="#62c462" stroke-width="3.6" stroke-linejoin="round"/><polyline points="98.90,615.02 98.90,662.69 78.20,709.69" fill="none" stroke="#5b5bd6" stroke-width="3.6" stroke-linejoin="round"/><circle cx="36.70" cy="47.00" r="10.3" fill="#fff" stroke="#b9b9b9" stroke-width="2"/><circle cx="57.45" cy="141.67" r="10.3" fill="#fff" stroke="#b9b9b9" stroke-width="2"/><circle cx="57.45" cy="236.34" r="10.3" fill="#fff" stroke="#b9b9b9" stroke-width="2"/><circle cx="57.45" cy="331.01" r="10.3" fill="#fff" stroke="#b9b9b9" stroke-width="2"/><circle cx="57.45" cy="425.68" r="10.3" fill="#fff" stroke="#b9b9b9" stroke-width="2"/><circle cx="78.20" cy="520.35" r="10.3" fill="#fff" stroke="#b9b9b9" stroke-width="2"/><circle cx="98.90" cy="615.02" r="10.3" fill="#fff" stroke="#b9b9b9" stroke-width="2"/><circle cx="78.20" cy="709.69" r="10.3" fill="#fff" stroke="#b9b9b9" stroke-width="2"/><circle cx="78.20" cy="804.36" r="10.3" fill="#fff" stroke="#b9b9b9" stroke-width="2"/><circle cx="36.70" cy="899.03" r="10.3" fill="#fff" stroke="#b9b9b9" stroke-width="2"/><circle cx="36.70" cy="993.70" r="10.3" fill="#fff" stroke="#b9b9b9" stroke-width="2"/><circle cx="36.70" cy="1088.37" r="10.3" fill="#fff" stroke="#b9b9b9" stroke-width="2"/></svg>
<svg class="r" style="left:430.0px;top:220.0px" width="67" height="67"><use href="#avT"/></svg>
<div class="t" style="left:517.4px;top:215.5px;font-size:24.0px;line-height:34px;font-family:'Liberation Sans', sans-serif;color:#6f6f6f">Tobias Günther</div>
<div class="r" style="left:700.0px;top:213.0px;width:103.0px;height:36.0px;background:#4a8eea"></div>
<div class="t" style="left:751.5px;width:0;display:flex;justify-content:center;top:215.5px;font-size:24.0px;line-height:34px;font-family:'Liberation Sans', sans-serif;color:#fff">featur...</div>
<div class="t" style="right:2045.0px;top:215.5px;font-size:24.0px;line-height:34px;font-family:'Liberation Sans', sans-serif;color:#6f6f6f">7/26/2013</div>
<div class="t" style="left:517.4px;top:262.8px;font-size:22.2px;line-height:34px;font-family:'Liberation Mono', monospace;color:#6b6b6b">206b5012</div>
<div class="t" style="left:641.7px;top:259.3px;font-size:24.0px;line-height:34px;font-family:'Liberation Sans', sans-serif;color:#1a1a1a">Change headlines for abo...</div>
<svg class="r" style="left:450.7px;top:314.7px" width="67" height="67"><use href="#avB"/></svg>
<div class="t" style="left:538.1px;top:310.2px;font-size:24.0px;line-height:34px;font-family:'Liberation Sans', sans-serif;color:#ffffff">Bruno Brito</div>
<div class="r" style="left:680.0px;top:307.7px;width:83.6px;height:36.0px;background:#74a7f0"></div>
<div class="t" style="left:721.8px;width:0;display:flex;justify-content:center;top:310.2px;font-size:24.0px;line-height:34px;font-family:'Liberation Sans', sans-serif;color:#fff">HEAD</div>
<div class="r" style="left:768.0px;top:307.7px;width:24.0px;height:36.0px;background:#74a7f0"></div>
<div class="t" style="left:780.0px;width:0;display:flex;justify-content:center;top:310.2px;font-size:24.0px;line-height:34px;font-family:'Liberation Sans', sans-serif;color:#fff">...</div>
<div class="t" style="right:2045.0px;top:310.2px;font-size:24.0px;line-height:34px;font-family:'Liberation Sans', sans-serif;color:#ffffff">10/12/2023</div>
<div class="t" style="left:538.1px;top:357.5px;font-size:22.2px;line-height:34px;font-family:'Liberation Mono', monospace;color:#ffffff">7a41d880</div>
<div class="t" style="left:662.4px;top:354.0px;font-size:24.0px;line-height:34px;font-family:'Liberation Sans', sans-serif;color:#ffffff">Add About page to navig...</div>
<svg class="r" style="left:450.7px;top:409.3px" width="67" height="67"><use href="#avT"/></svg>
<div class="t" style="left:538.1px;top:404.8px;font-size:24.0px;line-height:34px;font-family:'Liberation Sans', sans-serif;color:#6f6f6f">Tobias Günther</div>
<div class="t" style="right:2045.0px;top:404.8px;font-size:24.0px;line-height:34px;font-family:'Liberation Sans', sans-serif;color:#6f6f6f">7/26/2013</div>
<div class="t" style="left:538.1px;top:452.1px;font-size:22.2px;line-height:34px;font-family:'Liberation Mono', monospace;color:#6b6b6b">782e0cb8</div>
<div class="t" style="left:662.4px;top:448.6px;font-size:24.0px;line-height:34px;font-family:'Liberation Sans', sans-serif;color:#1a1a1a">Change headlines for abo...</div>
<svg class="r" style="left:450.7px;top:504.0px" width="67" height="67"><use href="#avT"/></svg>
<div class="t" style="left:538.1px;top:499.5px;font-size:24.0px;line-height:34px;font-family:'Liberation Sans', sans-serif;color:#6f6f6f">Tobias Günther</div>
<div class="t" style="right:2045.0px;top:499.5px;font-size:24.0px;line-height:34px;font-family:'Liberation Sans', sans-serif;color:#6f6f6f">7/26/2013</div>
<div class="t" style="left:538.1px;top:546.8px;font-size:22.2px;line-height:34px;font-family:'Liberation Mono', monospace;color:#6b6b6b">0ea9e169</div>
<div class="t" style="left:662.4px;top:543.3px;font-size:24.0px;line-height:34px;font-family:'Liberation Sans', sans-serif;color:#1a1a1a">Add simple robots.txt</div>
<svg class="r" style="left:450.7px;top:598.7px" width="67" height="67"><use href="#avT"/></svg>
<div class="t" style="left:538.1px;top:594.2px;font-size:24.0px;line-height:34px;font-family:'Liberation Sans', sans-serif;color:#6f6f6f">Tobias Günther</div>
<div class="t" style="right:2045.0px;top:594.2px;font-size:24.0px;line-height:34px;font-family:'Liberation Sans', sans-serif;color:#6f6f6f">6/26/2014</div>
<div class="t" style="left:538.1px;top:641.5px;font-size:22.2px;line-height:34px;font-family:'Liberation Mono', monospace;color:#6b6b6b">c0403f1f</div>
<div class="t" style="left:662.4px;top:638.0px;font-size:24.0px;line-height:34px;font-family:'Liberation Sans', sans-serif;color:#1a1a1a">Optimize markup structur...</div>
<svg class="r" style="left:471.5px;top:693.4px" width="67" height="67"><use href="#avT"/></svg>
<div class="t" style="left:558.9px;top:688.9px;font-size:24.0px;line-height:34px;font-family:'Liberation Sans', sans-serif;color:#6f6f6f">Tobias Günther</div>
<div class="r" style="left:741.2px;top:686.4px;width:62.1px;height:36.0px;background:#acacac"></div>
<div class="t" style="left:772.2px;width:0;display:flex;justify-content:center;top:688.9px;font-size:24.0px;line-height:34px;font-family:'Liberation Sans', sans-serif;color:#f4f4f4">or...</div>
<div class="r" style="left:808.0px;top:686.4px;width:24.0px;height:36.0px;background:#acacac"></div>
<div class="t" style="left:820.0px;width:0;display:flex;justify-content:center;top:688.9px;font-size:24.0px;line-height:34px;font-family:'Liberation Sans', sans-serif;color:#f4f4f4">...</div>
<div class="t" style="right:2045.0px;top:688.9px;font-size:24.0px;line-height:34px;font-family:'Liberation Sans', sans-serif;color:#6f6f6f">8/12/2021</div>
<div class="t" style="left:558.9px;top:736.1px;font-size:22.2px;line-height:34px;font-family:'Liberation Mono', monospace;color:#6b6b6b">dbf75826</div>
<div class="t" style="left:683.1px;top:732.6px;font-size:24.0px;line-height:34px;font-family:'Liberation Sans', sans-serif;color:#1a1a1a">Improve product listings</div>
<svg class="r" style="left:492.2px;top:788.0px" width="67" height="67"><use href="#avT"/></svg>
<div class="t" style="left:579.6px;top:783.5px;font-size:24.0px;line-height:34px;font-family:'Liberation Sans', sans-serif;color:#6f6f6f">Tobias Günther</div>
<div class="r" style="left:761.7px;top:781.0px;width:43.6px;height:36.0px;background:#acacac"></div>
<div class="t" style="left:783.5px;width:0;display:flex;justify-content:center;top:783.5px;font-size:24.0px;line-height:34px;font-family:'Liberation Sans', sans-serif;color:#f4f4f4">ɔ..</div>
<div class="r" style="left:810.0px;top:781.0px;width:24.0px;height:36.0px;background:#acacac"></div>
<div class="t" style="left:822.0px;width:0;display:flex;justify-content:center;top:783.5px;font-size:24.0px;line-height:34px;font-family:'Liberation Sans', sans-serif;color:#f4f4f4">...</div>
<div class="t" style="right:2045.0px;top:783.5px;font-size:24.0px;line-height:34px;font-family:'Liberation Sans', sans-serif;color:#6f6f6f">5/16/2018</div>
<div class="t" style="left:579.6px;top:830.8px;font-size:22.2px;line-height:34px;font-family:'Liberation Mono', monospace;color:#6b6b6b">7173808e</div>
<div class="t" style="left:703.9px;top:827.3px;font-size:24.0px;line-height:34px;font-family:'Liberation Sans', sans-serif;color:#1a1a1a">Change page structure</div>
<svg class="r" style="left:492.2px;top:882.7px" width="67" height="67"><use href="#avT"/></svg>
<div class="t" style="left:579.6px;top:878.2px;font-size:24.0px;line-height:34px;font-family:'Liberation Sans', sans-serif;color:#6f6f6f">Tobias Günther</div>
<div class="r" style="left:761.7px;top:875.7px;width:43.6px;height:36.0px;background:#f6d94a"></div>
<div class="t" style="left:783.5px;width:0;display:flex;justify-content:center;top:878.2px;font-size:24.0px;line-height:34px;font-family:'Liberation Sans', sans-serif;color:#222">√..</div>
<div class="r" style="left:810.0px;top:875.7px;width:24.0px;height:36.0px;background:#acacac"></div>
<div class="t" style="left:822.0px;width:0;display:flex;justify-content:center;top:878.2px;font-size:24.0px;line-height:34px;font-family:'Liberation Sans', sans-serif;color:#f4f4f4">...</div>
<div class="t" style="right:2045.0px;top:878.2px;font-size:24.0px;line-height:34px;font-family:'Liberation Sans', sans-serif;color:#6f6f6f">6/26/2014</div>
<div class="t" style="left:579.6px;top:925.5px;font-size:22.2px;line-height:34px;font-family:'Liberation Mono', monospace;color:#6b6b6b">6bcf266b</div>
<div class="t" style="left:703.9px;top:922.0px;font-size:24.0px;line-height:34px;font-family:'Liberation Sans', sans-serif;color:#1a1a1a">Optimize markup stru...</div>
<svg class="r" style="left:471.5px;top:977.4px" width="67" height="67"><use href="#avT"/></svg>
<div class="t" style="left:558.9px;top:972.9px;font-size:24.0px;line-height:34px;font-family:'Liberation Sans', sans-serif;color:#6f6f6f">Tobias Günther</div>
<div class="r" style="left:741.2px;top:970.4px;width:62.1px;height:36.0px;background:#acacac"></div>
<div class="t" style="left:772.2px;width:0;display:flex;justify-content:center;top:972.9px;font-size:24.0px;line-height:34px;font-family:'Liberation Sans', sans-serif;color:#f4f4f4">or...</div>
<div class="r" style="left:808.0px;top:970.4px;width:24.0px;height:36.0px;background:#acacac"></div>
<div class="t" style="left:820.0px;width:0;display:flex;justify-content:center;top:972.9px;font-size:24.0px;line-height:34px;font-family:'Liberation Sans', sans-serif;color:#f4f4f4">...</div>
<div class="t" style="right:2045.0px;top:972.9px;font-size:24.0px;line-height:34px;font-family:'Liberation Sans', sans-serif;color:#6f6f6f">7/26/2013</div>
<div class="t" style="left:558.9px;top:1020.2px;font-size:22.2px;line-height:34px;font-family:'Liberation Mono', monospace;color:#6b6b6b">2b504bee</div>
<div class="t" style="left:683.1px;top:1016.7px;font-size:24.0px;line-height:34px;font-family:'Liberation Sans', sans-serif;color:#1a1a1a">Change headlines for a...</div>
<svg class="r" style="left:471.5px;top:1072.0px" width="67" height="67"><use href="#avT"/></svg>
<div class="t" style="left:558.9px;top:1067.5px;font-size:24.0px;line-height:34px;font-family:'Liberation Sans', sans-serif;color:#6f6f6f">Tobias Günther</div>
<div class="t" style="right:2045.0px;top:1067.5px;font-size:24.0px;line-height:34px;font-family:'Liberation Sans', sans-serif;color:#6f6f6f">7/26/2013</div>
<div class="t" style="left:558.9px;top:1114.8px;font-size:22.2px;line-height:34px;font-family:'Liberation Mono', monospace;color:#6b6b6b">0023cddd</div>
<div class="t" style="left:683.1px;top:1111.3px;font-size:24.0px;line-height:34px;font-family:'Liberation Sans', sans-serif;color:#1a1a1a">Add simple robots.txt</div>
<svg class="r" style="left:450.7px;top:1166.7px" width="67" height="67"><use href="#avT"/></svg>
<div class="t" style="left:538.1px;top:1162.2px;font-size:24.0px;line-height:34px;font-family:'Liberation Sans', sans-serif;color:#6f6f6f">Tobias Günther</div>
<div class="t" style="right:2045.0px;top:1162.2px;font-size:24.0px;line-height:34px;font-family:'Liberation Sans', sans-serif;color:#6f6f6f">7/26/2013</div>
<div class="t" style="left:538.1px;top:1209.5px;font-size:22.2px;line-height:34px;font-family:'Liberation Mono', monospace;color:#6b6b6b">113adcc4</div>
<div class="t" style="left:662.4px;top:1206.0px;font-size:24.0px;line-height:34px;font-family:'Liberation Sans', sans-serif;color:#1a1a1a">Add jQuery javascript res...</div>
<svg class="r" style="left:430.0px;top:1261.4px" width="67" height="67"><use href="#avT"/></svg>
<div class="t" style="left:517.4px;top:1256.9px;font-size:24.0px;line-height:34px;font-family:'Liberation Sans', sans-serif;color:#6f6f6f">Tobias Günther</div>
<div class="t" style="right:2045.0px;top:1256.9px;font-size:24.0px;line-height:34px;font-family:'Liberation Sans', sans-serif;color:#6f6f6f">7/26/2013</div>
<div class="t" style="left:517.4px;top:1304.2px;font-size:22.2px;line-height:34px;font-family:'Liberation Mono', monospace;color:#6b6b6b">fcd61994</div>
<div class="t" style="left:641.7px;top:1300.7px;font-size:24.0px;line-height:34px;font-family:'Liberation Sans', sans-serif;color:#1a1a1a">Initial Commit</div>
<svg class="r" style="left:945.0px;top:267.0px" width="22" height="22" viewBox="0 0 22 22"><circle cx="11" cy="10.5" r="10.2" fill="#f0a030"/></svg>
<div class="r" style="left:1020.0px;top:125.0px;width:1990.0px;height:80.0px;background:#eeeeee"></div>
<div class="r" style="left:1020.0px;top:205.0px;width:1990.0px;height:2.0px;background:#c6c6c6"></div>
<div class="r" style="left:1020.0px;top:207.0px;width:1990.0px;height:1373.0px;background:#ffffff"></div>
<div class="r" style="left:3003.6px;top:207.0px;width:6.4px;height:1049.0px;background:#6b6b6b"></div>
<div class="t" style="left:1062.0px;top:151.0px;font-size:26.4px;line-height:34px;font-family:'Liberation Mono', monospace;color:#1a1a1a;-webkit-text-stroke:0.3px #1a1a1a">7a41d880</div>
<div class="r" style="left:2740.6px;top:141.0px;width:250.1px;height:48.2px;background:#f0f0f0;box-sizing:border-box;border:2px solid #c4c4c4"></div>
<div class="r" style="left:2742.6px;top:143.0px;width:158.2px;height:44.2px;background:#4a8eea"></div>
<div class="t" style="left:2821.7px;width:0;display:flex;justify-content:center;top:151.0px;font-size:24.0px;line-height:34px;font-family:'Liberation Sans', sans-serif;color:#ffffff;-webkit-text-stroke:0.5px #ffffff">Changeset</div>
<div class="t" style="left:2944.7px;width:0;display:flex;justify-content:center;top:151.0px;font-size:24.0px;line-height:34px;font-family:'Liberation Sans', sans-serif;color:#111111;-webkit-text-stroke:0.6px #111111">Tree</div>
<div class="t" style="right:1743.2px;top:238.2px;font-size:24.0px;line-height:34px;font-family:'Liberation Sans', sans-serif;color:#727272">Author</div>
<div class="t" style="left:1301.0px;top:238.2px;font-size:24.0px;line-height:34px;font-family:'Liberation Sans', sans-serif;color:#1a1a1a">Bruno Brito &lt;bruno@git-tower.com&gt;</div>
<div class="t" style="right:1743.2px;top:279.6px;font-size:24.0px;line-height:34px;font-family:'Liberation Sans', sans-serif;color:#727272">Author Date</div>
<div class="t" style="left:1301.0px;top:279.6px;font-size:24.0px;line-height:34px;font-family:'Liberation Sans', sans-serif;color:#1a1a1a">12. October 2023 at 17:00:46</div>
<div class="t" style="right:1743.2px;top:321.0px;font-size:24.0px;line-height:34px;font-family:'Liberation Sans', sans-serif;color:#727272">Committer</div>
<div class="t" style="left:1301.0px;top:321.0px;font-size:24.0px;line-height:34px;font-family:'Liberation Sans', sans-serif;color:#1a1a1a">Bruno Brito &lt;bruno@git-tower.com&gt;</div>
<div class="t" style="right:1743.2px;top:362.7px;font-size:24.0px;line-height:34px;font-family:'Liberation Sans', sans-serif;color:#727272">Committer Date</div>
<div class="t" style="left:1301.0px;top:362.7px;font-size:24.0px;line-height:34px;font-family:'Liberation Sans', sans-serif;color:#1a1a1a">12. October 2023 at 17:00:46</div>
<div class="t" style="right:1743.2px;top:404.2px;font-size:24.0px;line-height:34px;font-family:'Liberation Sans', sans-serif;color:#727272">Refs</div>
<div class="t" style="right:1743.2px;top:446.2px;font-size:24.0px;line-height:34px;font-family:'Liberation Sans', sans-serif;color:#727272">Commit Hash</div>
<div class="t" style="left:1301.0px;top:446.2px;font-size:24.0px;line-height:34px;font-family:'Liberation Sans', sans-serif;color:#1a1a1a">7a41d880fa6824db2c93265635ca268fdab7ed2e</div>
<div class="t" style="right:1743.2px;top:487.4px;font-size:24.0px;line-height:34px;font-family:'Liberation Sans', sans-serif;color:#727272">Parent Hash</div>
<div class="t" style="left:1301.0px;top:487.4px;font-size:24.0px;line-height:34px;font-family:'Liberation Sans', sans-serif;color:#1a1a1a">782e0cb8e4b86e7ece3e70453289a2d3489fdd1b</div>
<div class="t" style="right:1743.2px;top:528.5px;font-size:24.0px;line-height:34px;font-family:'Liberation Sans', sans-serif;color:#727272">TreeHash</div>
<div class="t" style="left:1301.0px;top:528.5px;font-size:24.0px;line-height:34px;font-family:'Liberation Sans', sans-serif;color:#1a1a1a">3c6aa65835aa62baf860381d9d56edc8b7dbd066</div>
<div class="r" style="left:1290.4px;top:401.5px;width:83.2px;height:36.0px;background:#4a8eea"></div>
<div class="t" style="left:1332.0px;width:0;display:flex;justify-content:center;top:404.5px;font-size:24.0px;line-height:34px;font-family:'Liberation Sans', sans-serif;color:#fff">HEAD</div>
<div class="r" style="left:1379.0px;top:401.5px;width:73.3px;height:36.0px;background:#4a8eea"></div>
<div class="t" style="left:1415.7px;width:0;display:flex;justify-content:center;top:404.5px;font-size:24.0px;line-height:34px;font-family:'Liberation Sans', sans-serif;color:#fff">main</div>
<svg class="r" style="left:2826.5px;top:235.8px" width="165" height="165"><use href="#avB"/></svg>
<div class="r" style="left:1020.0px;top:620.0px;width:1983.6px;height:2.0px;background:#cdcdcd"></div>
<div class="t" style="left:1053.7px;top:680.5px;font-size:26.4px;line-height:34px;font-family:'Liberation Mono', monospace;color:#1a1a1a;-webkit-text-stroke:0.3px #1a1a1a">Add About page to navigation</div>
<div class="t" style="left:1052.3px;top:750.5px;font-size:24.0px;line-height:34px;font-family:'Liberation Sans', sans-serif;color:#1a1a1a">Collapse all</div>
<div class="t" style="right:19.5px;top:751.0px;font-size:24.0px;line-height:34px;font-family:'Liberation Sans', sans-serif;color:#727272">Showing 2 changed files</div>
<div class="r" style="left:1020.0px;top:796.0px;width:1983.6px;height:2.0px;background:#cdcdcd"></div>
<svg class="r" style="left:1050.0px;top:824.0px" width="22" height="16" viewBox="0 0 22 16"><path d="M2.5 3.5 L10.8 11.5 L19 3.5" fill="none" stroke="#222" stroke-width="2"/></svg>
<div class="t" style="left:1125.4px;top:816.4px;font-size:24.0px;line-height:34px;font-family:'Liberation Sans', sans-serif;color:#4a8eea">modified</div>
<div class="r" style="left:1251.0px;top:817.0px;width:29.0px;height:28.6px;background:#4a8eea"></div>
<div class="t" style="left:1265.5px;width:0;display:flex;justify-content:center;top:815.0px;font-size:20.0px;line-height:34px;font-family:'Liberation Sans', sans-serif;color:#fff">M</div>
<div class="t" style="left:1296.8px;top:816.4px;font-size:24.0px;line-height:34px;font-family:'Liberation Sans', sans-serif;color:#8a8a8a">about.html</div>
<div class="r" style="left:1020.0px;top:864.2px;width:1983.6px;height:2.0px;background:#cdcdcd"></div>
<div class="t" style="left:1049.5px;top:887.2px;font-size:22.5px;line-height:34px;font-family:'Liberation Mono', monospace;color:#8e8e8e">@@ -13,7 +13,7 @@</div>
<div class="r" style="left:1020.0px;top:938.0px;width:1983.6px;height:2.0px;background:#cdcdcd"></div>
<div class="r" style="left:1120.6px;top:940.0px;width:2.0px;height:267.6px;background:#c8c8c8"></div>
<div class="r" style="left:1225.4px;top:940.0px;width:2.0px;height:267.6px;background:#c8c8c8"></div>
<div class="t" style="right:1908.3px;top:942.1px;font-size:26.4px;line-height:34px;font-family:'Liberation Mono', monospace;color:#a2a2a2">13</div>
<div class="t" style="right:1805.8px;top:942.1px;font-size:26.4px;line-height:34px;font-family:'Liberation Mono', monospace;color:#a2a2a2">13</div>
<div class="t" style="left:1231.0px;top:942.1px;font-size:26.4px;line-height:34px;font-family:'Liberation Mono', monospace;color:#505050;white-space:pre;-webkit-text-stroke:0.15px #505050">      &lt;div id="navigation"&gt;</div>
<div class="t" style="right:1908.3px;top:975.6px;font-size:26.4px;line-height:34px;font-family:'Liberation Mono', monospace;color:#a2a2a2">14</div>
<div class="t" style="right:1805.8px;top:975.6px;font-size:26.4px;line-height:34px;font-family:'Liberation Mono', monospace;color:#a2a2a2">14</div>
<div class="t" style="left:1231.0px;top:975.6px;font-size:26.4px;line-height:34px;font-family:'Liberation Mono', monospace;color:#505050;white-space:pre;-webkit-text-stroke:0.15px #505050">        &lt;ul&gt;</div>
<div class="t" style="right:1908.3px;top:1009.0px;font-size:26.4px;line-height:34px;font-family:'Liberation Mono', monospace;color:#a2a2a2">15</div>
<div class="t" style="right:1805.8px;top:1009.0px;font-size:26.4px;line-height:34px;font-family:'Liberation Mono', monospace;color:#a2a2a2">15</div>
<div class="t" style="left:1231.0px;top:1009.0px;font-size:26.4px;line-height:34px;font-family:'Liberation Mono', monospace;color:#505050;white-space:pre;-webkit-text-stroke:0.15px #505050">          &lt;li&gt;&lt;a href="index.html"&gt;Home&lt;/a&gt;&lt;/li&gt;</div>
<div class="r" style="left:1229.3px;top:1040.3px;width:1774.3px;height:33.5px;background:#fbe5e5"></div>
<div class="r" style="left:1229.3px;top:1040.3px;width:1774.3px;height:2.0px;background:#f2a6a3"></div>
<div class="t" style="right:1908.3px;top:1042.4px;font-size:26.4px;line-height:34px;font-family:'Liberation Mono', monospace;color:#a2a2a2">-16</div>
<div class="t" style="left:1231.0px;top:1042.4px;font-size:26.4px;line-height:34px;font-family:'Liberation Mono', monospace;color:#505050;white-space:pre;-webkit-text-stroke:0.15px #505050">          &lt;li&gt;&lt;a href="about.html"&gt;About&lt;/a&gt;&lt;/li&gt;</div>
<div class="r" style="left:1229.3px;top:1073.8px;width:1774.3px;height:33.5px;background:#e5f6e3"></div>
<div class="r" style="left:1229.3px;top:1073.8px;width:1774.3px;height:2.0px;background:#a6e0a2"></div>
<div class="r" style="left:1229.3px;top:1106.2px;width:1774.3px;height:2.0px;background:#a6e0a2"></div>
<div class="t" style="right:1805.8px;top:1075.9px;font-size:26.4px;line-height:34px;font-family:'Liberation Mono', monospace;color:#a2a2a2">+16</div>
<div class="t" style="left:1231.0px;top:1075.9px;font-size:26.4px;line-height:34px;font-family:'Liberation Mono', monospace;color:#505050;white-space:pre;-webkit-text-stroke:0.15px #505050">          &lt;li&gt;&lt;a href="about.html"&gt;About Us&lt;/a&gt;&lt;/li&gt;</div>
<div class="t" style="right:1908.3px;top:1109.3px;font-size:26.4px;line-height:34px;font-family:'Liberation Mono', monospace;color:#a2a2a2">17</div>
<div class="t" style="right:1805.8px;top:1109.3px;font-size:26.4px;line-height:34px;font-family:'Liberation Mono', monospace;color:#a2a2a2">17</div>
<div class="t" style="left:1231.0px;top:1109.3px;font-size:26.4px;line-height:34px;font-family:'Liberation Mono', monospace;color:#505050;white-space:pre;-webkit-text-stroke:0.15px #505050">          &lt;li&gt;&lt;a href="imprint.html"&gt;Imprint&lt;/a&gt;&lt;/li&gt;</div>
<div class="t" style="right:1908.3px;top:1142.8px;font-size:26.4px;line-height:34px;font-family:'Liberation Mono', monospace;color:#a2a2a2">18</div>
<div class="t" style="right:1805.8px;top:1142.8px;font-size:26.4px;line-height:34px;font-family:'Liberation Mono', monospace;color:#a2a2a2">18</div>
<div class="t" style="left:1231.0px;top:1142.8px;font-size:26.4px;line-height:34px;font-family:'Liberation Mono', monospace;color:#505050;white-space:pre;-webkit-text-stroke:0.15px #505050">        &lt;/ul&gt;</div>
<div class="t" style="right:1908.3px;top:1176.2px;font-size:26.4px;line-height:34px;font-family:'Liberation Mono', monospace;color:#a2a2a2">19</div>
<div class="t" style="right:1805.8px;top:1176.2px;font-size:26.4px;line-height:34px;font-family:'Liberation Mono', monospace;color:#a2a2a2">19</div>
<div class="t" style="left:1231.0px;top:1176.2px;font-size:26.4px;line-height:34px;font-family:'Liberation Mono', monospace;color:#505050;white-space:pre;-webkit-text-stroke:0.15px #505050">      &lt;/div&gt;</div>
<div class="r" style="left:1020.0px;top:1208.7px;width:1983.6px;height:2.0px;background:#cdcdcd"></div>
<svg class="r" style="left:1050.0px;top:1236.7px" width="22" height="16" viewBox="0 0 22 16"><path d="M2.5 3.5 L10.8 11.5 L19 3.5" fill="none" stroke="#222" stroke-width="2"/></svg>
<div class="t" style="left:1125.4px;top:1229.1px;font-size:24.0px;line-height:34px;font-family:'Liberation Sans', sans-serif;color:#4a8eea">modified</div>
<div class="r" style="left:1251.0px;top:1229.7px;width:29.0px;height:28.6px;background:#4a8eea"></div>
<div class="t" style="left:1265.5px;width:0;display:flex;justify-content:center;top:1227.7px;font-size:20.0px;line-height:34px;font-family:'Liberation Sans', sans-serif;color:#fff">M</div>
<div class="t" style="left:1296.8px;top:1229.1px;font-size:24.0px;line-height:34px;font-family:'Liberation Sans', sans-serif;color:#8a8a8a">index.html</div>
<div class="r" style="left:1020.0px;top:1276.9px;width:1990.0px;height:2.0px;background:#cdcdcd"></div>
<div class="t" style="left:1049.5px;top:1299.9px;font-size:22.5px;line-height:34px;font-family:'Liberation Mono', monospace;color:#8e8e8e">@@ -14,6 +14,7 @@</div>
<div class="r" style="left:1020.0px;top:1350.7px;width:1990.0px;height:2.0px;background:#cdcdcd"></div>
<div class="r" style="left:1120.6px;top:1352.7px;width:2.0px;height:227.3px;background:#c8c8c8"></div>
<div class="r" style="left:1225.4px;top:1352.7px;width:2.0px;height:227.3px;background:#c8c8c8"></div>
<div class="t" style="right:1908.3px;top:1354.8px;font-size:26.4px;line-height:34px;font-family:'Liberation Mono', monospace;color:#a2a2a2">14</div>
<div class="t" style="right:1805.8px;top:1354.8px;font-size:26.4px;line-height:34px;font-family:'Liberation Mono', monospace;color:#a2a2a2">14</div>
<div class="t" style="left:1231.0px;top:1354.8px;font-size:26.4px;line-height:34px;font-family:'Liberation Mono', monospace;color:#505050;white-space:pre;-webkit-text-stroke:0.15px #505050">        &lt;ul&gt;</div>
<div class="t" style="right:1908.3px;top:1388.2px;font-size:26.4px;line-height:34px;font-family:'Liberation Mono', monospace;color:#a2a2a2">15</div>
<div class="t" style="right:1805.8px;top:1388.2px;font-size:26.4px;line-height:34px;font-family:'Liberation Mono', monospace;color:#a2a2a2">15</div>
<div class="t" style="left:1231.0px;top:1388.2px;font-size:26.4px;line-height:34px;font-family:'Liberation Mono', monospace;color:#505050;white-space:pre;-webkit-text-stroke:0.15px #505050">          &lt;li&gt;&lt;a href="index.html"&gt;Home&lt;/a&gt;&lt;/li&gt;</div>
<div class="t" style="right:1908.3px;top:1421.7px;font-size:26.4px;line-height:34px;font-family:'Liberation Mono', monospace;color:#a2a2a2">16</div>
<div class="t" style="right:1805.8px;top:1421.7px;font-size:26.4px;line-height:34px;font-family:'Liberation Mono', monospace;color:#a2a2a2">16</div>
<div class="t" style="left:1231.0px;top:1421.7px;font-size:26.4px;line-height:34px;font-family:'Liberation Mono', monospace;color:#505050;white-space:pre;-webkit-text-stroke:0.15px #505050">          &lt;li&gt;&lt;a href="about.html"&gt;About&lt;/a&gt;&lt;/li&gt;</div>
<div class="r" style="left:1229.3px;top:1453.0px;width:1780.7px;height:33.5px;background:#e5f6e3"></div>
<div class="r" style="left:1229.3px;top:1453.0px;width:1780.7px;height:2.0px;background:#a6e0a2"></div>
<div class="r" style="left:1229.3px;top:1485.5px;width:1780.7px;height:2.0px;background:#a6e0a2"></div>
<div class="t" style="right:1805.8px;top:1455.1px;font-size:26.4px;line-height:34px;font-family:'Liberation Mono', monospace;color:#a2a2a2">+17</div>
<div class="t" style="left:1231.0px;top:1455.1px;font-size:26.4px;line-height:34px;font-family:'Liberation Mono', monospace;color:#505050;white-space:pre;-webkit-text-stroke:0.15px #505050">          &lt;li&gt;&lt;a href="product.html"&gt;Product&lt;/a&gt;&lt;/li&gt;</div>
<div class="t" style="right:1908.3px;top:1488.6px;font-size:26.4px;line-height:34px;font-family:'Liberation Mono', monospace;color:#a2a2a2">17</div>
<div class="t" style="right:1805.8px;top:1488.6px;font-size:26.4px;line-height:34px;font-family:'Liberation Mono', monospace;color:#a2a2a2">18</div>
<div class="t" style="left:1231.0px;top:1488.6px;font-size:26.4px;line-height:34px;font-family:'Liberation Mono', monospace;color:#505050;white-space:pre;-webkit-text-stroke:0.15px #505050">          &lt;li&gt;&lt;a href="imprint.html"&gt;Imprint&lt;/a&gt;&lt;/li&gt;</div>
<div class="t" style="right:1908.3px;top:1522.0px;font-size:26.4px;line-height:34px;font-family:'Liberation Mono', monospace;color:#a2a2a2">18</div>
<div class="t" style="right:1805.8px;top:1522.0px;font-size:26.4px;line-height:34px;font-family:'Liberation Mono', monospace;color:#a2a2a2">19</div>
<div class="t" style="left:1231.0px;top:1522.0px;font-size:26.4px;line-height:34px;font-family:'Liberation Mono', monospace;color:#505050;white-space:pre;-webkit-text-stroke:0.15px #505050">        &lt;/ul&gt;</div>
<div class="t" style="right:1908.3px;top:1555.5px;font-size:26.4px;line-height:34px;font-family:'Liberation Mono', monospace;color:#a2a2a2">19</div>
<div class="t" style="right:1805.8px;top:1555.5px;font-size:26.4px;line-height:34px;font-family:'Liberation Mono', monospace;color:#a2a2a2">20</div>
<div class="t" style="left:1231.0px;top:1555.5px;font-size:26.4px;line-height:34px;font-family:'Liberation Mono', monospace;color:#505050;white-space:pre;-webkit-text-stroke:0.15px #505050">      &lt;/div&gt;</div>
</body></html>
